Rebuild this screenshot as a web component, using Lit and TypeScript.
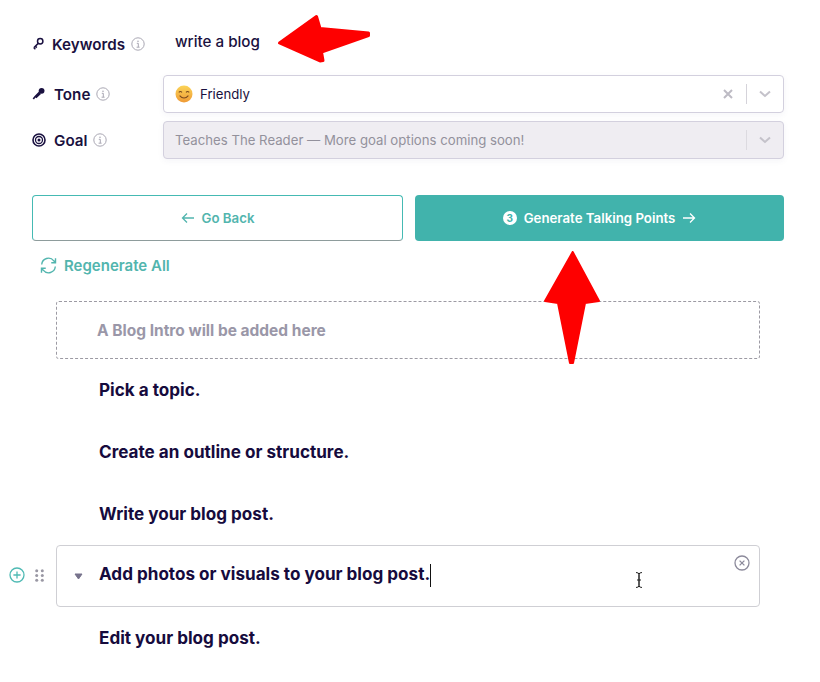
import { LitElement, css, html, svg } from "lit";
import { customElement } from "lit/decorators.js";

const info = html`<svg class="info" viewBox="0 0 14 14" width="14" height="14">
  <circle cx="7" cy="7" r="6.2" fill="none" stroke="currentColor" stroke-width="1"></circle>
  <circle cx="7" cy="4.2" r="0.8" fill="currentColor"></circle>
  <path d="M5.8 6.3H7.3V10M5.6 10.2H8.6" fill="none" stroke="currentColor" stroke-width="1"></path>
</svg>`;

const chevron = html`<svg viewBox="0 0 14 8" width="14" height="8">
  <path d="M2 1.5L7 6L12 1.5" fill="none" stroke="currentColor" stroke-width="2"></path>
</svg>`;

const keyIcon = svg`<circle cx="8.2" cy="4.3" r="2.7" fill="none" stroke="currentColor" stroke-width="1.5"></circle>
  <path d="M6.2 6.4L1.8 10.8M1.8 10.8L3.4 12.2M3.4 9.2L4.8 10.6" fill="none" stroke="currentColor" stroke-width="1.5"></path>`;
const micIcon = svg`<circle cx="9.6" cy="3.8" r="2.9" fill="currentColor"></circle>
  <path d="M7 4.6L9 7L4.4 11.2L3.4 10.4L2 12.6L0.6 11.6L2.4 9.2Z" fill="currentColor"></path>`;
const goalIcon = svg`<circle cx="7" cy="7" r="6" fill="none" stroke="currentColor" stroke-width="1.6"></circle>
  <circle cx="7" cy="7" r="3.5" fill="none" stroke="currentColor" stroke-width="1.3"></circle>
  <circle cx="7" cy="7" r="1.5" fill="currentColor"></circle>`;

@customElement("app-root")
export class AppRoot extends LitElement {
  static styles = css`
    :host {
      display: block;
      position: relative;
      width: 820px;
      height: 682px;
      overflow: hidden;
      background: #fff;
      color: #1a1140;
      font-family: Inter, "Liberation Sans", sans-serif;
      box-sizing: border-box;
      padding: 26px 36px 0 32px;
    }
    .fields {
      display: grid;
      grid-template-columns: 131px 1fr;
      grid-template-rows: 41px 38px 38px;
      row-gap: 8px;
      align-items: center;
    }
    .fields .label:first-child {
      margin-bottom: 5px;
    }
    .label {
      display: flex;
      align-items: center;
      font-size: 15.2px;
      font-weight: 600;
    }
    .label .glyph {
      width: 14px;
      height: 14px;
      margin-right: 6px;
      flex: none;
    }
    .label .glyph.wide {
      margin-right: 8px;
    }
    .label .info {
      margin-left: 6px;
      color: #a9a7b3;
    }
    .value {
      padding: 0 0 11px 12px;
      font-size: 15.2px;
      font-weight: 500;
    }
    .select {
      display: flex;
      align-items: center;
      height: 38px;
      box-sizing: border-box;
      padding: 0 11px 0 11px;
      border: 1px solid #d3d0de;
      border-radius: 4px;
      font-size: 13.2px;
      box-shadow: 0 2px 6px rgba(60, 50, 120, 0.05);
    }
    .select.off {
      background: #efedf2;
      color: #93919c;
    }
    .select .emoji {
      margin-right: 7px;
    }
    .select .text {
      flex: 1;
    }
    .select .x {
      color: #bdbbc4;
      margin-right: 13px;
      display: flex;
    }
    .select .sep {
      width: 1px;
      height: 20px;
      background: #d5d3da;
      margin-right: 11px;
    }
    .select .chev {
      color: #c4c2ca;
      display: flex;
    }
    .select.off .sep {
      background: #dcdae0;
    }
    .actions {
      display: grid;
      grid-template-columns: 371px 369px;
      column-gap: 12px;
      margin-top: 36px;
    }
    .btn {
      height: 46px;
      box-sizing: border-box;
      display: flex;
      align-items: center;
      justify-content: center;
      gap: 7px;
      border-radius: 4px;
      font-size: 13.25px;
      font-weight: 600;
    }
    .btn.back {
      color: #52b5ae;
      border: 1px solid #45bab3;
      border-bottom-color: #8e9c9c;
    }
    .btn.go {
      background: #41b3ac;
      color: #fff;
    }
    .step {
      width: 14px;
      height: 14px;
      border-radius: 50%;
      background: #fff;
      color: #41b3ac;
      font-size: 10px;
      font-weight: 700;
      line-height: 14px;
      text-align: center;
    }
    .regen {
      display: flex;
      align-items: center;
      gap: 7px;
      height: 20px;
      margin: 14px 0 0 8px;
      color: #52b5ae;
      font-size: 15px;
      font-weight: 600;
    }
    .list {
      margin: 26px 24px 0 24px;
    }
    .intro {
      height: 58px;
      box-sizing: border-box;
      border: 1px dashed #9c9aa3;
      border-radius: 3px;
      display: flex;
      align-items: center;
      padding-left: 40px;
      color: #9a97a8;
      font-size: 15.5px;
      font-weight: 700;
    }
    .row {
      position: relative;
      height: 62px;
      box-sizing: border-box;
      display: flex;
      align-items: center;
      padding: 0 0 2px 42px;
      font-size: 17.1px;
      font-weight: 700;
      color: #160b3d;
      border: 1px solid transparent;
      border-radius: 4px;
    }
    .row.active {
      border-color: #cfcfd4;
    }
    .caret {
      display: inline-block;
      width: 1px;
      height: 23px;
      background: #111;
      margin-left: 0;
      vertical-align: middle;
    }
    .tri {
      position: absolute;
      left: 17px;
      top: 27px;
      color: #77738c;
    }
    .close {
      position: absolute;
      right: 9px;
      top: 9px;
      color: #8c8a9b;
    }
    .side {
      position: absolute;
      left: -48px;
      top: 21px;
      display: flex;
      align-items: center;
      gap: 10px;
    }
    .overlay {
      position: absolute;
      left: 0;
      top: 0;
      pointer-events: none;
    }
  `;

  render() {
    return html`
      <div class="fields">
        <div class="label">
          <svg class="glyph" viewBox="0 0 14 14">${keyIcon}</svg>Keywords${info}
        </div>
        <div class="value">write a blog</div>
        <div class="label">
          <svg class="glyph wide" viewBox="0 0 14 14">${micIcon}</svg>Tone${info}
        </div>
        <div class="select">
          <svg class="emoji" viewBox="0 0 18 18" width="18" height="18">
            <defs>
              <linearGradient id="face" x1="0" y1="0" x2="0" y2="1">
                <stop offset="0" stop-color="#fbd457"></stop>
                <stop offset="1" stop-color="#ef9a35"></stop>
              </linearGradient>
            </defs>
            <circle cx="9" cy="9" r="8.5" fill="url(#face)"></circle>
            <path d="M3.8 7.4Q5.4 5.6 7 7.4M11 7.4Q12.6 5.6 14.2 7.4M4.6 10.6Q9 15.4 13.4 10.6" fill="none" stroke="#7a4a1e" stroke-width="1.1"></path>
          </svg>
          <span class="text">Friendly</span>
          <span class="x">
            <svg viewBox="0 0 10 10" width="10" height="10">
              <path d="M1 1L9 9M9 1L1 9" stroke="currentColor" stroke-width="2"></path>
            </svg>
          </span>
          <span class="sep"></span>
          <span class="chev">${chevron}</span>
        </div>
        <div class="label">
          <svg class="glyph wide" viewBox="0 0 14 14">${goalIcon}</svg>Goal${info}
        </div>
        <div class="select off">
          <span class="text">Teaches The Reader — More goal options coming soon!</span>
          <span class="sep"></span>
          <span class="chev">${chevron}</span>
        </div>
      </div>

      <div class="actions">
        <div class="btn back">
          <svg viewBox="0 0 14 12" width="14" height="12">
            <path d="M13 6H1.5M6 1.5L1.5 6L6 10.5" fill="none" stroke="currentColor" stroke-width="1.3"></path>
          </svg>
          Go Back
        </div>
        <div class="btn go">
          <span class="step">3</span>
          Generate Talking Points
          <svg viewBox="0 0 14 12" width="14" height="12">
            <path d="M1 6H12.5M8 1.5L12.5 6L8 10.5" fill="none" stroke="currentColor" stroke-width="1.3"></path>
          </svg>
        </div>
      </div>

      <div class="regen">
        <svg viewBox="0 0 16 16" width="17" height="17" fill="none" stroke="currentColor" stroke-width="1.3">
          <path d="M1.6 7A6.4 6.4 0 0 1 13 3.6L14.6 5.4M14.6 1.2V5.4H10.6"></path>
          <path d="M14.4 9A6.4 6.4 0 0 1 3 12.4L1.4 10.6M1.4 14.8V10.6H5.4"></path>
        </svg>
        Regenerate All
      </div>

      <div class="list">
        <div class="intro">A Blog Intro will be added here</div>
        <div class="row">Pick a topic.</div>
        <div class="row">Create an outline or structure.</div>
        <div class="row">Write your blog post.</div>
        <div class="row active">
          <div class="side">
            <svg viewBox="0 0 16 16" width="16" height="16" fill="none" stroke="#4fbab4" stroke-width="1.3">
              <circle cx="8" cy="8" r="7"></circle>
              <path d="M8 4.4V11.6M4.4 8H11.6"></path>
            </svg>
            <svg viewBox="0 0 9 13" width="9" height="13" fill="#9a98a4">
              <circle cx="1.7" cy="1.7" r="1.5"></circle>
              <circle cx="7.3" cy="1.7" r="1.5"></circle>
              <circle cx="1.7" cy="6.5" r="1.5"></circle>
              <circle cx="7.3" cy="6.5" r="1.5"></circle>
              <circle cx="1.7" cy="11.3" r="1.5"></circle>
              <circle cx="7.3" cy="11.3" r="1.5"></circle>
            </svg>
          </div>
          <svg class="tri" viewBox="0 0 9 7" width="9" height="7">
            <path d="M1 1H8L4.5 6Z" fill="currentColor" stroke="currentColor" stroke-linejoin="round"></path>
          </svg>
          <span>Add photos or visuals to your blog post.<span class="caret"></span></span>
          <svg class="close" viewBox="0 0 16 16" width="16" height="16" fill="none" stroke="currentColor" stroke-width="1.3">
            <circle cx="8" cy="8" r="7"></circle>
            <path d="M5.6 5.6L10.4 10.4M10.4 5.6L5.6 10.4"></path>
          </svg>
        </div>
        <div class="row">Edit your blog post.</div>
      </div>

      <svg class="overlay" viewBox="0 0 820 682" width="820" height="682">
        <path d="M279.5 43L316.5 16.5L320 28.5L368.5 33L368.5 35.5L321.5 52L323 60.5L320 61Z" fill="#fe0000" stroke="#fe0000" stroke-width="3" stroke-linejoin="round"></path>
        <path d="M572.7 252L545 301L558 303L570 363L573 363L585 303L599 301Z" fill="#fe0000" stroke="#fe0000" stroke-width="2" stroke-linejoin="round"></path>
        <path d="M636 572.5Q639 572.5 639 574.5V585.5Q639 587.5 636 587.5M642 572.5Q639 572.5 639 574.5V585.5Q639 587.5 642 587.5M637 580H641" fill="none" stroke="#222" stroke-width="1"></path>
      </svg>
    `;
  }
}
